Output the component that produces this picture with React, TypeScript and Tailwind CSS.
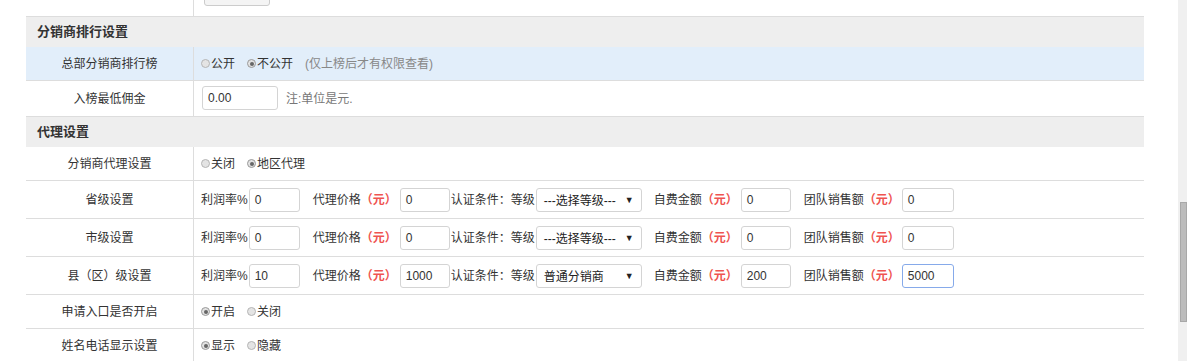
import type { ReactNode } from "react";

const font = "font-['Liberation_Sans','Noto_Sans_CJK_SC',sans-serif]";

type RowProps = {
  label: string;
  h: string;
  bg?: string;
  children?: ReactNode;
};

function Row({ label, h, bg = "", children }: RowProps) {
  return (
    <div className={`flex border-b border-[#ddd] ${h} ${bg}`}>
      <div className="w-[168px] shrink-0 border-r border-[#ddd] flex items-center justify-center text-[12px] text-[#333]">
        {label}
      </div>
      <div className="flex items-center pl-[7px] text-[12px] text-[#333]">
        {children}
      </div>
    </div>
  );
}

function SectionHeader({ title }: { title: string }) {
  return (
    <div className="h-[30px] bg-[#eeeeee] flex items-center pl-[11px] text-[13px] font-bold text-[#333]">
      {title}
    </div>
  );
}

function Radio({ label, checked }: { label: string; checked?: boolean }) {
  return (
    <span className="flex items-center mr-[12px]">
      <span
        className={
          checked
            ? "w-[9px] h-[9px] rounded-full border border-[#9a9a9a] bg-[#e2e2e2] flex items-center justify-center mr-[1px]"
            : "w-[9px] h-[9px] rounded-full border border-[#b5b5b5] bg-[#e4e4e4] mr-[1px]"
        }
      >
        {checked && <span className="w-[4px] h-[4px] rounded-full bg-[#666]" />}
      </span>
      {label}
    </span>
  );
}

function Input({ value, w = "w-[51px]", focus }: { value: string; w?: string; focus?: boolean }) {
  return (
    <div
      className={
        focus
          ? `${w} h-[24px] border border-[#86aaea] rounded-[3px] flex items-center pl-[5px] text-[12px] text-[#333] bg-white`
          : `${w} h-[24px] border border-[#d4d4d4] rounded-[3px] flex items-center pl-[5px] text-[12px] text-[#333] bg-white`
      }
    >
      {value}
    </div>
  );
}

const Yuan = () => <span className="text-[#ef5350] font-bold">（元）</span>;

function AgentFields({ rate, price, level, self, team, focusTeam }: {
  rate: string;
  price: string;
  level: string;
  self: string;
  team: string;
  focusTeam?: boolean;
}) {
  return (
    <div className="flex items-center">
      <span>利润率%</span>
      <span className="ml-[1px]"><Input value={rate} /></span>
      <span className="ml-[13px]">代理价格</span>
      <Yuan />
      <span className="ml-[3px]"><Input value={price} w="w-[50px]" /></span>
      <span className="ml-[1px]">认证条件：等级</span>
      <div className="ml-[1px] w-[106px] h-[24px] border border-[#d4d4d4] rounded-[3px] flex items-center justify-between pl-[7px] pr-[7px] pt-[2px] text-[12px] text-[#222] bg-white">
        <span>{level}</span>
        <span className="text-[9px]">▼</span>
      </div>
      <span className="ml-[12px]">自费金额</span>
      <Yuan />
      <span className="ml-[3px]"><Input value={self} w="w-[50px]" /></span>
      <span className="ml-[13px]">团队销售额</span>
      <Yuan />
      <span className="ml-[2px]"><Input value={team} w="w-[52px]" focus={focusTeam} /></span>
    </div>
  );
}

export default function App() {
  return (
    <div className={`flex w-[1187px] h-[361px] overflow-hidden bg-white ${font}`}>
      <div className="flex-1 pl-[26px]">
        <div className="w-[1118px]">
          <div className="flex h-[17px] border-b border-[#ddd]">
            <div className="w-[168px] border-r border-[#ddd]" />
            <div className="ml-[10px] mt-[-19px] w-[66px] h-[25px] border border-[#ccc] rounded-[3px] bg-[#f4f4f4]" />
          </div>

          <SectionHeader title="分销商排行设置" />
          <Row label="总部分销商排行榜" h="h-[34px]" bg="bg-[#e2eefa]">
            <Radio label="公开" />
            <Radio label="不公开" checked />
            <span className="text-[#888]">(仅上榜后才有权限查看)</span>
          </Row>
          <Row label="入榜最低佣金" h="h-[36px]">
            <div className="mt-[-1px] ml-[1px]">
              <Input value="0.00" w="w-[76px]" />
            </div>
            <span className="ml-[8px] text-[#777]">注:单位是元.</span>
          </Row>

          <SectionHeader title="代理设置" />
          <Row label="分销商代理设置" h="h-[34px]">
            <Radio label="关闭" />
            <Radio label="地区代理" checked />
          </Row>
          <Row label="省级设置" h="h-[38px]">
            <AgentFields rate="0" price="0" level="---选择等级---" self="0" team="0" />
          </Row>
          <Row label="市级设置" h="h-[38px]">
            <AgentFields rate="0" price="0" level="---选择等级---" self="0" team="0" />
          </Row>
          <Row label="县（区）级设置" h="h-[38px]">
            <AgentFields rate="10" price="1000" level="普通分销商" self="200" team="5000" focusTeam />
          </Row>
          <Row label="申请入口是否开启" h="h-[34px]">
            <Radio label="开启" checked />
            <Radio label="关闭" />
          </Row>
          <Row label="姓名电话显示设置" h="h-[34px]">
            <Radio label="显示" checked />
            <Radio label="隐藏" />
          </Row>
        </div>
      </div>
      <div className="w-[9px] bg-[#f0f0f0] pl-[2px]">
        <div className="mt-[202px] h-[120px] bg-[#bcbcbc] border border-[#a8a8a8]" />
      </div>
    </div>
  );
}
